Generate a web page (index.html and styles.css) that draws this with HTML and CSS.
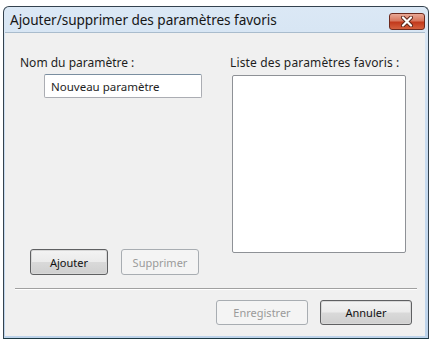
FILE: index.html
```html
<!DOCTYPE html>
<html lang="fr">
<head>
    <meta charset="UTF-8">
    <meta name="viewport" content="width=device-width, initial-scale=1.0">
    <title>Ajouter/supprimer des paramètres favoris</title>
    <link rel="stylesheet" href="styles.css">
</head>
<body>
    <div class="window">
        <div class="titlebar">
            <span class="title">Ajouter/supprimer des paramètres favoris</span>
            <button class="close">
                <svg width="14" height="11" viewBox="0 0 14 11">
                    <path d="M3 1.5 L11 9.5 M11 1.5 L3 9.5" stroke="#5a2418" stroke-width="4" stroke-linecap="round"/>
                    <path d="M3 1.5 L11 9.5 M11 1.5 L3 9.5" stroke="#ffffff" stroke-width="2.2" stroke-linecap="round"/>
                </svg>
            </button>
        </div>
        <div class="client">
            <div class="main">
                <div class="col-left">
                    <p class="label">Nom du paramètre :</p>
                    <input class="name" type="text" value="Nouveau paramètre">
                    <div class="left-buttons">
                        <button class="btn active">Ajouter</button>
                        <button class="btn" disabled>Supprimer</button>
                    </div>
                </div>
                <div class="col-right">
                    <p class="label">Liste des paramètres favoris :</p>
                    <div class="list"></div>
                </div>
            </div>
            <div class="sep"></div>
            <div class="bottom">
                <button class="btn wide" disabled>Enregistrer</button>
                <button class="btn wide active">Annuler</button>
            </div>
        </div>
    </div>
</body>
</html>
```

FILE: styles.css
```css
*{
    margin:0;
    padding:0;
    box-sizing: border-box;
}
body{
    background-color: #ffffff;
    font-family: "Noto Sans", "DejaVu Sans", sans-serif;
    width: 432px;
    height: 340px;
    overflow: hidden;
}

.window{
    margin: 6px 0 0 3px;
    width: 426px;
    height: 333px;
    border: 1px solid #34424e;
    border-bottom-color: #1c3a44;
    border-radius: 6px 6px 0 0;
    background: linear-gradient(to bottom, #dbe8f5 0%, #c9dcf0 40%, #bdd3ea 100%);
    display: flex;
    flex-direction: column;
}
.titlebar{
    height: 25px;
    display: flex;
    align-items: center;
    justify-content: space-between;
    padding: 0 3px 0 6px;
}
.title{
    font-size: 13.6px;
    color: #161616;
    letter-spacing: -0.05px;
}
.close{
    width: 36px;
    height: 17px;
    margin-top: 3px;
    border: 1px solid #6d2a1e;
    border-radius: 3px;
    background: linear-gradient(to bottom, #e9a896 0%, #d8775e 45%, #c2391c 55%, #d4603e 100%);
    display: flex;
    align-items: center;
    justify-content: center;
}

.client{
    flex: 1;
    margin: 0 3px 2px 1px;
    background-color: #f0f0f0;
    border-top: 1px solid #a9bccd;
    display: flex;
    flex-direction: column;
    padding-top: 22px;
}
.main{
    display: flex;
    padding-left: 15px;
    height: 220px;
}
.col-left{
    width: 212px;
    display: flex;
    flex-direction: column;
}
.col-right{
    display: flex;
    flex-direction: column;
}
.label{
    font-size: 12px;
    line-height: 16px;
    color: #1e1e1e;
}
.col-right .label{
    margin-left: -2px;
    letter-spacing: 0.15px;
}
.name{
    margin: 3px 0 0 24px;
    width: 158px;
    height: 24px;
    border: 1px solid #abadb3;
    border-top-color: #7a8ea0;
    border-radius: 2px;
    background-color: #ffffff;
    padding: 0 6px;
    font-family: inherit;
    font-size: 11.5px;
    color: #1e1e1e;
    outline: none;
}
.list{
    margin-top: 4px;
    width: 174px;
    height: 178px;
    border: 1px solid #8e9196;
    border-radius: 2px;
    background-color: #ffffff;
}
.left-buttons{
    margin-top: auto;
    margin-left: 10px;
    display: flex;
    gap: 13px;
}

.btn{
    width: 78px;
    height: 26px;
    border: 1px solid #a8adb2;
    border-radius: 3px;
    background: #f4f4f4;
    font-family: inherit;
    font-size: 11px;
    color: #9a9a9a;
}
.btn.active{
    border: 1px solid #5f6062;
    box-shadow: inset 0 0 0 1px #d8d8d8;
    background: linear-gradient(to bottom, #f3f3f3 0%, #ebebeb 48%, #d9d9d9 52%, #cfcfcf 100%);
    color: #111111;
}
.btn.wide{
    width: 92px;
    height: 25px;
}

.sep{
    margin: 13px 8px 0 10px;
    height: 2px;
    border-top: 1px solid #a0a0a0;
    border-bottom: 1px solid #ffffff;
}
.bottom{
    display: flex;
    justify-content: flex-end;
    gap: 12px;
    padding: 10px 13px 0 0;
}
```
